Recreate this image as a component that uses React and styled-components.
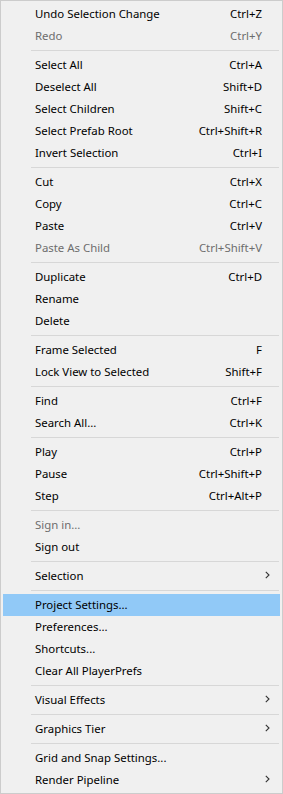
import React from 'react'
import styled, { createGlobalStyle } from 'styled-components'

const GlobalStyle = createGlobalStyle`
  html, body {
    margin: 0;
    padding: 0;
    background: #f0f0f0;
  }
`

const Menu = styled.div`
  box-sizing: border-box;
  width: 283px;
  height: 794px;
  padding: 2px 2px;
  background: #f0f0f0;
  border: 1px solid #cccccc;
  font-family: "Noto Sans", "Segoe UI", sans-serif;
  font-size: 11.4px;
  color: #000000;
  display: flex;
  flex-direction: column;
`

const Row = styled.div`
  box-sizing: border-box;
  height: 22px;
  display: grid;
  grid-template-columns: 1fr auto 18px;
  align-items: center;
  padding-left: 32px;
  padding-bottom: 2px;
  background: ${(p) => (p.$active ? '#91c9f7' : 'transparent')};
  color: ${(p) => (p.$disabled ? '#6d6d6d' : '#000000')};
  white-space: nowrap;
`

const Label = styled.span``

const Shortcut = styled.span`
  text-align: right;
`

const Arrow = styled.span`
  display: flex;
  align-items: center;
  justify-content: flex-start;
  padding-left: 3px;
`

const Separator = styled.div`
  height: 7px;
  display: flex;
  align-items: center;
  padding-left: 28px;
  padding-right: 1px;
  &::after {
    content: '';
    flex: 1;
    height: 1px;
    background: #d7d7d7;
  }
`

const groups = [
  [
    ['Undo Selection Change', 'Ctrl+Z'],
    ['Redo', 'Ctrl+Y', { disabled: true }],
  ],
  [
    ['Select All', 'Ctrl+A'],
    ['Deselect All', 'Shift+D'],
    ['Select Children', 'Shift+C'],
    ['Select Prefab Root', 'Ctrl+Shift+R'],
    ['Invert Selection', 'Ctrl+I'],
  ],
  [
    ['Cut', 'Ctrl+X'],
    ['Copy', 'Ctrl+C'],
    ['Paste', 'Ctrl+V'],
    ['Paste As Child', 'Ctrl+Shift+V', { disabled: true }],
  ],
  [
    ['Duplicate', 'Ctrl+D'],
    ['Rename'],
    ['Delete'],
  ],
  [
    ['Frame Selected', 'F'],
    ['Lock View to Selected', 'Shift+F'],
  ],
  [
    ['Find', 'Ctrl+F'],
    ['Search All...', 'Ctrl+K'],
  ],
  [
    ['Play', 'Ctrl+P'],
    ['Pause', 'Ctrl+Shift+P'],
    ['Step', 'Ctrl+Alt+P'],
  ],
  [
    ['Sign in...', '', { disabled: true }],
    ['Sign out'],
  ],
  [['Selection', '', { sub: true }]],
  [
    ['Project Settings...', '', { active: true }],
    ['Preferences...'],
    ['Shortcuts...'],
    ['Clear All PlayerPrefs'],
  ],
  [['Visual Effects', '', { sub: true }]],
  [['Graphics Tier', '', { sub: true }]],
  [
    ['Grid and Snap Settings...'],
    ['Render Pipeline', '', { sub: true }],
  ],
]

function Chevron() {
  return (
    <svg width="5" height="8" viewBox="0 0 5 8">
      <path d="M0.8 0.8 L4 4 L0.8 7.2" fill="none" stroke="#333" strokeWidth="1.1" />
    </svg>
  )
}

export default function App() {
  return (
    <>
      <GlobalStyle />
      <Menu>
        {groups.map((group, gi) => (
          <React.Fragment key={gi}>
            {gi > 0 && <Separator />}
            {group.map(([label, shortcut, opts = {}]) => (
              <Row key={label} $disabled={opts.disabled} $active={opts.active}>
                <Label>{label}</Label>
                <Shortcut>{shortcut}</Shortcut>
                <Arrow>{opts.sub && <Chevron />}</Arrow>
              </Row>
            ))}
          </React.Fragment>
        ))}
      </Menu>
    </>
  )
}
